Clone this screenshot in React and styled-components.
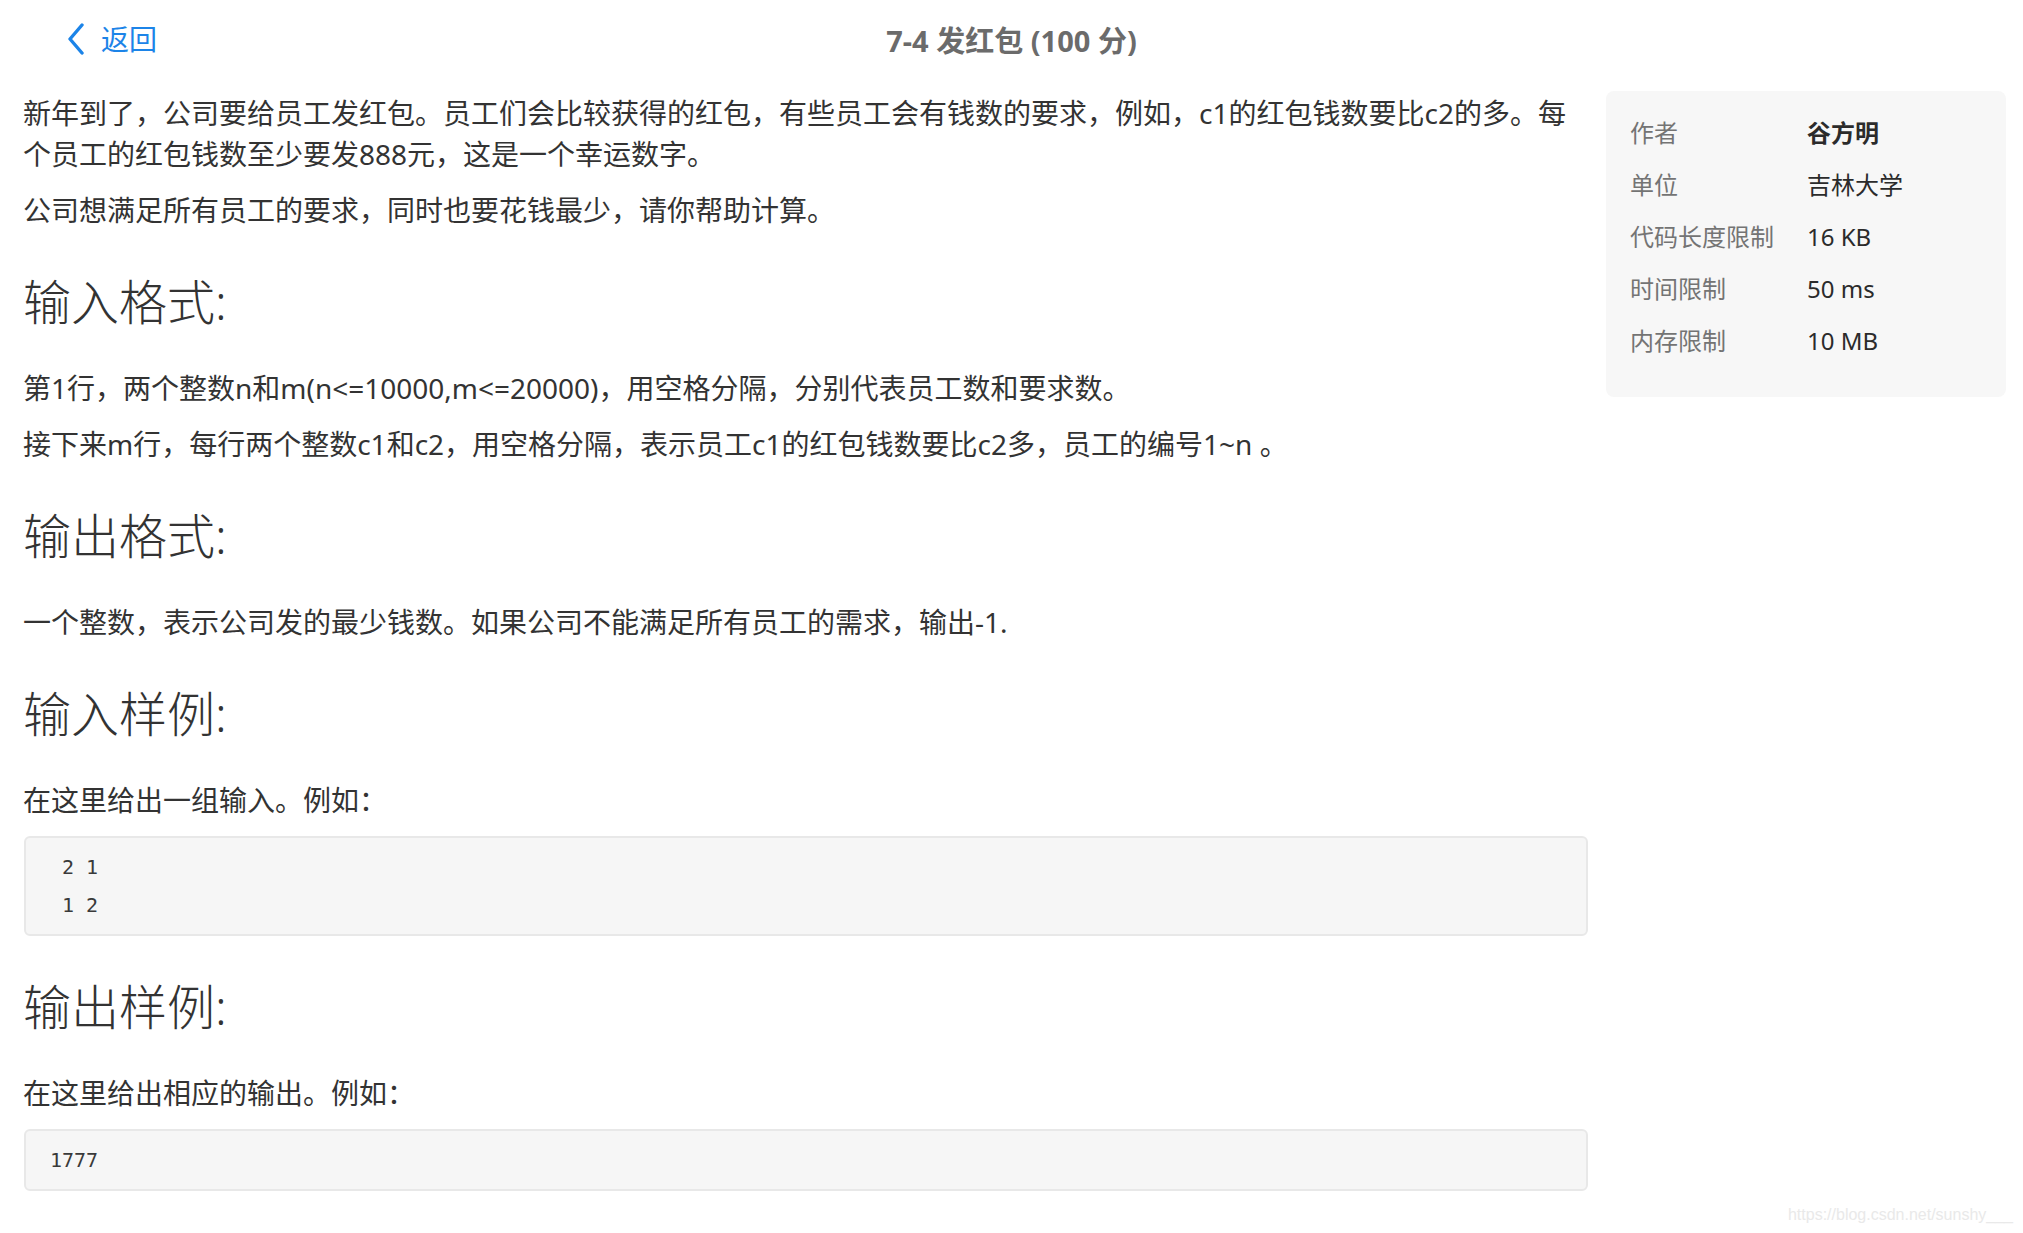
import styled, { createGlobalStyle } from "styled-components";

const GlobalStyle = createGlobalStyle`
  html, body {
    margin: 0;
    padding: 0;
    background: #fff;
  }
  body {
    font-family: "Noto Sans", "Noto Sans CJK SC", sans-serif;
    color: #333;
  }
`;

const Page = styled.div`
  position: relative;
  width: 2023px;
  height: 1233px;
  overflow: hidden;
`;

const TopBar = styled.header`
  height: 78px;
  display: grid;
  grid-template-columns: 1fr auto 1fr;
  align-items: center;
  padding-left: 67px;
`;

const BackLink = styled.a`
  display: flex;
  align-items: center;
  gap: 16px;
  color: #1c84e8;
  font-size: 28px;
  line-height: 1;
  text-decoration: none;
  cursor: pointer;
`;

const Title = styled.h1`
  margin: 0 0 0 -67px;
  font-size: 29px;
  font-weight: 700;
  color: #6b6b6b;
`;

const Body = styled.div`
  display: flex;
  align-items: flex-start;
  gap: 18px;
  padding: 13px 17px 0 23px;
`;

const Main = styled.main`
  flex: 1;
  min-width: 0;
  padding-top: 2px;
`;

const P = styled.p`
  margin: 0 0 15px;
  font-size: 28px;
  line-height: 41px;
  color: #333;
`;

const H = styled.h2`
  margin: 42px 0 37px;
  font-size: 48px;
  line-height: 58px;
  font-weight: 300;
  color: #333;
`;

const Code = styled.pre`
  margin: 0 0 0 1px;
  background: #f6f6f6;
  border: 2px solid #e8e8e8;
  border-radius: 6px;
  padding: 10px 24px;
  font-family: "DejaVu Sans Mono", "Liberation Mono", monospace;
  font-size: 20px;
  line-height: 38px;
  color: #3a3a3a;
`;

const Aside = styled.aside`
  width: 400px;
  flex-shrink: 0;
  box-sizing: border-box;
  background: #f7f7f7;
  border-radius: 8px;
  padding: 16px 24px 30px;
`;

const Row = styled.div`
  display: grid;
  grid-template-columns: 177px 1fr;
  font-size: 24px;
  line-height: 52px;
`;

const Label = styled.span`
  color: #747474;
`;

const Value = styled.span`
  color: #2b2b2b;
  font-weight: ${p => (p.$bold ? 700 : 400)};
`;

const Watermark = styled.div`
  position: absolute;
  right: 10px;
  bottom: 8px;
  font-family: "Liberation Sans", sans-serif;
  font-size: 16px;
  line-height: 20px;
  color: #e9e9e9;
`;

const Chevron = () => (
  <svg width="18" height="32" viewBox="0 0 18 32" fill="none">
    <path
      d="M15 2 L3 16 L15 30"
      stroke="#1c84e8"
      strokeWidth="3.4"
      strokeLinecap="round"
      strokeLinejoin="round"
    />
  </svg>
);

const info = [
  { label: "作者", value: "谷方明", bold: true },
  { label: "单位", value: "吉林大学" },
  { label: "代码长度限制", value: "16 KB" },
  { label: "时间限制", value: "50 ms" },
  { label: "内存限制", value: "10 MB" }
];

const App = () => {
  return (
    <Page>
      <GlobalStyle />
      <TopBar>
        <BackLink>
          <Chevron />
          返回
        </BackLink>
        <Title>7-4 发红包 (100 分)</Title>
        <span />
      </TopBar>
      <Body>
        <Main>
          <P>
            新年到了，公司要给员工发红包。员工们会比较获得的红包，有些员工会有钱数的要求，例如，c1的红包钱数要比c2的多。每个员工的红包钱数至少要发888元，这是一个幸运数字。
          </P>
          <P>公司想满足所有员工的要求，同时也要花钱最少，请你帮助计算。</P>
          <H>输入格式:</H>
          <P>
            第1行，两个整数n和m(n&lt;=10000,m&lt;=20000)，用空格分隔，分别代表员工数和要求数。
          </P>
          <P>
            接下来m行，每行两个整数c1和c2，用空格分隔，表示员工c1的红包钱数要比c2多，员工的编号1~n 。
          </P>
          <H>输出格式:</H>
          <P>一个整数，表示公司发的最少钱数。如果公司不能满足所有员工的需求，输出-1.</P>
          <H>输入样例:</H>
          <P>在这里给出一组输入。例如：</P>
          <Code>{" 2 1\n 1 2"}</Code>
          <H>输出样例:</H>
          <P>在这里给出相应的输出。例如：</P>
          <Code>1777</Code>
        </Main>
        <Aside>
          {info.map(item => (
            <Row key={item.label}>
              <Label>{item.label}</Label>
              <Value $bold={item.bold}>{item.value}</Value>
            </Row>
          ))}
        </Aside>
      </Body>
      <Watermark>https://blog.csdn.net/sunshy___</Watermark>
    </Page>
  );
};

export default App;
